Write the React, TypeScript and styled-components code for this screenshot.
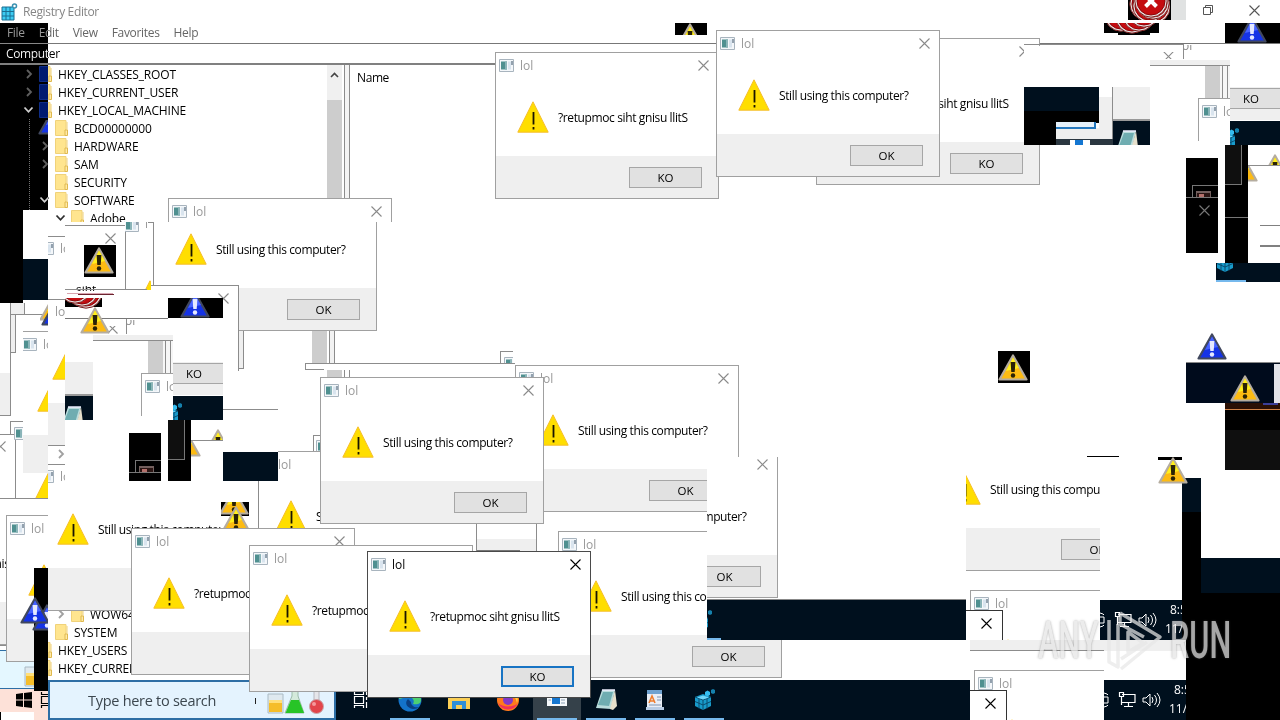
import { ReactNode } from "react";
import styled, { createGlobalStyle, css } from "styled-components";

const GlobalStyle = createGlobalStyle`
  body {
    margin: 0;
    overflow: hidden;
    background: #fff;
    font-family: "Open Sans", "Noto Sans", sans-serif;
    font-size: 12px;
    color: #000;
  }
  svg {
    display: block;
    flex: none;
  }
`;

const NAVY = "#00101e";
const GREY = "#efefef";
const LINE = "#8c8c8c";

/* ---------- registry editor window ---------- */

const Desktop = styled.div`
  position: relative;
  width: 1280px;
  height: 720px;
  overflow: hidden;
  background: #fff;
  display: flex;
  flex-direction: column;
`;

const TitleBar = styled.div`
  height: 23px;
  display: flex;
  align-items: center;
  gap: 5px;
  color: #858585;
  letter-spacing: -0.35px;
  .controls {
    margin-left: auto;
    display: flex;
    align-items: center;
    gap: 36px;
    padding: 0 20px 3px 0;
  }
`;

const MenuBar = styled.div`
  height: 18px;
  display: flex;
  align-items: center;
  gap: 14px;
  padding: 0 0 2px 7px;
  color: #666;
  letter-spacing: -0.32px;
`;

const AddressBar = styled.div`
  height: 19px;
  display: flex;
  align-items: center;
  padding-left: 6px;
  letter-spacing: -0.35px;
  border-top: 1px solid #777;
  border-bottom: 2px solid #808080;
`;

const Panes = styled.div`
  height: 615px;
  display: flex;
`;

const Tree = styled.div`
  width: 327px;
  box-sizing: border-box;
  overflow: hidden;
  background: repeating-linear-gradient(#8a8a8a 0 1px, transparent 1px 2px) 29px 54px / 1px 100% no-repeat;
`;

const TreeRow = styled.div<{ $depth: number }>`
  height: 18px;
  display: flex;
  align-items: center;
  padding-left: ${(p) => 23 + p.$depth * 16}px;
  gap: 5px;
  letter-spacing: ${(p) => (p.$depth ? -0.1 : -0.16)}px;
  white-space: nowrap;
  span {
    padding-left: 1px;
  }
`;

const HiddenRows = styled.div`
  height: 378px;
`;

const ScrollBar = styled.div`
  width: 15px;
  background: #f0f0f0;
  .arrow {
    height: 35px;
    display: flex;
    justify-content: center;
    padding-top: 6px;
    box-sizing: border-box;
  }
  .thumb {
    height: 500px;
    background: #cdcdcd;
  }
`;

const ListPane = styled.div`
  flex: 1;
  margin-left: 2px;
  border-left: 1px solid ${LINE};
  padding-left: 4px;
  background: #f4f4f4;
  .columns {
    height: 100%;
    background: #fff;
    border-left: 1px solid ${LINE};
    padding: 4px 7px;
    letter-spacing: -0.4px;
  }
`;

const TaskBar = styled.div`
  height: 40px;
  display: flex;
  background: ${NAVY};
  .start {
    width: 48px;
    background: #fde1d8;
    display: flex;
    align-items: center;
    gap: 8px;
    padding-left: 16px;
    box-sizing: border-box;
    overflow: hidden;
  }
`;

const SearchBox = styled.div`
  width: 288px;
  box-sizing: border-box;
  border: 2px solid #2d6ea5;
  background: #e4f3fe;
  display: flex;
  align-items: center;
  padding: 0 8px 0 38px;
  font-size: 14.5px;
  letter-spacing: -0.28px;
  color: #3c474f;
  white-space: nowrap;
  i {
    width: 1px;
    height: 6px;
    margin: 2px 10px 0 auto;
    background: #222;
  }
`;

const Apps = styled.div`
  display: flex;
  padding-left: 1px;
  gap: 1px;
`;

const AppSlot = styled.div<{ $open?: boolean; $current?: boolean }>`
  width: 48px;
  box-sizing: border-box;
  display: flex;
  align-items: center;
  justify-content: center;
  background-color: ${(p) => (p.$current ? "#35414a" : "transparent")};
  background-image: ${(p) => (p.$open ? "linear-gradient(#76b9ed, #76b9ed)" : "none")};
  background-size: 40px 2px;
  background-position: 50% 100%;
  background-repeat: no-repeat;
`;

/* ---------- loose pieces lying over the desktop ---------- */

type Box = { $x: number; $y: number; $w: number; $h: number };

const place = css<Box>`
  position: absolute;
  left: ${(p) => p.$x}px;
  top: ${(p) => p.$y}px;
  width: ${(p) => p.$w}px;
  height: ${(p) => p.$h}px;
`;

const Block = styled.div<Box & { $c: string }>`
  ${place}
  background: ${(p) => p.$c};
`;

const Inverted = styled.div<Box>`
  ${place}
  backdrop-filter: invert(1);
`;

const ShardFrame = styled.div<Box>`
  ${place}
  overflow: hidden;
  .plane {
    position: absolute;
    left: ${(p) => -p.$x}px;
    top: ${(p) => -p.$y}px;
    width: 1280px;
    height: 720px;
  }
`;

const Pin = styled.div<{ $x: number; $y: number; $c?: string; $size?: number }>`
  position: absolute;
  left: ${(p) => p.$x}px;
  top: ${(p) => p.$y}px;
  color: ${(p) => p.$c ?? "#000"};
  font-size: ${(p) => p.$size ?? 12}px;
  line-height: 16px;
  white-space: nowrap;
`;

const DialogFrame = styled.div<{ $x: number; $y: number; $active?: boolean }>`
  position: absolute;
  left: ${(p) => p.$x}px;
  top: ${(p) => p.$y}px;
  width: 224px;
  height: 147px;
  box-sizing: border-box;
  border: 1px solid ${(p) => (p.$active ? "#4a4a4a" : "#a0a0a0")};
  background: #fff;
  display: flex;
  flex-direction: column;
  .caption {
    height: 24px;
    display: flex;
    align-items: center;
    padding: 0 9px 0 3px;
    gap: 6px;
    color: ${(p) => (p.$active ? "#000" : "#999")};
  }
  .caption svg:last-child {
    margin-left: auto;
  }
  .message {
    flex: 1;
    display: flex;
    align-items: center;
    gap: 9px;
    padding: 1px 0 0 21px;
    letter-spacing: -0.38px;
    white-space: nowrap;
  }
  .footer {
    height: 42px;
    background: ${GREY};
    display: flex;
    justify-content: flex-end;
    padding: 11px 16px 0 0;
    box-sizing: border-box;
  }
`;

const PushButton = styled.div<{ $active?: boolean }>`
  width: 73px;
  height: 21px;
  box-sizing: border-box;
  display: flex;
  align-items: center;
  justify-content: center;
  background: #e1e1e1;
  border: ${(p) => (p.$active ? "2px solid #1874c4" : "1px solid #a6a6a6")};
  font-size: 11.5px;
`;

const Watermark = styled.div`
  position: absolute;
  left: 1038px;
  top: 609px;
  height: 64px;
  width: 194px;
  display: flex;
  align-items: center;
  justify-content: space-between;
  opacity: 0.72;
  color: #e6e6e6;
  text-shadow: 0 0 3px rgba(90, 90, 90, 0.75);
  span {
    display: block;
    width: 62px;
    font: 500 52px/64px Roboto, sans-serif;
    transform-origin: 0 50%;
    transform: scaleX(0.59);
  }
`;

/* ---------- drawings ---------- */

const Flat = () => (
  <svg width="32" height="32" viewBox="0 0 32 32">
    <path d="M16 0.8 31.2 31.2H0.8Z" fill="#ffde00" stroke="#f5bd2c" />
    <path d="M16.500 11v12.500M16.500 26v2.500" stroke="#1a1500" strokeWidth="1.800" />
  </svg>
);

const Gloss = ({ blue }: { blue?: boolean }) => (
  <svg width="30" height="27" viewBox="0 0 30 27">
    <path
      d="M15 1.5 28.5 25.5H1.5Z"
      fill={blue ? "#1533e6" : "#fdbb12"}
      stroke={blue ? "#41485e" : "#b5ada0"}
      strokeWidth="2.2"
      strokeLinejoin="round"
    />
    <path d="M15 3.500 21 14 8 17Z" fill={blue ? "#4763ff" : "#fff01e"} />
    <path d="M12.600 8h4.800l-.7 10h-3.400z" fill={blue ? "#e5e9ff" : "#2a2206"} />
    <circle cx="15" cy="21.5" r="2.2" fill={blue ? "#e5e9ff" : "#2a2206"} />
  </svg>
);

const ErrorDisc = () => (
  <svg width="34" height="34" viewBox="0 0 34 34">
    <circle cx="17" cy="17" r="16.200" fill="#e4dede" stroke="#7e1d1d" />
    <circle cx="17" cy="17" r="14" fill="#c40c10" stroke="#8c0508" />
    <path d="M11.500 11.500 22.500 22.500M22.500 11.500 11.500 22.500" stroke="#fff" strokeWidth="4" />
  </svg>
);

const AppIcon = () => (
  <svg width="15" height="13" viewBox="0 0 15 13">
    <path d="M.5 .5h14v12H.5z" fill="#f4f7fa" stroke="#a8b4be" />
    <path d="M2 2.500h6v8H2z" fill="#4f9090" />
    <path d="M6 2.500h2v8H6z" fill="#8ab4b8" />
    <path d="M9 2.500h3v8H9z" fill="#d9e4ee" />
    <path d="M12 2h2v4h-2z" fill="#93a1ae" />
  </svg>
);

const Cross = ({ color = "#8a8a8a" }: { color?: string }) => (
  <svg width="11" height="11" viewBox="0 0 11 11">
    <path d="M.5 .5l10 10M10.5 .5l-10 10" stroke={color} strokeWidth="1.1" />
  </svg>
);

const Restore = () => (
  <svg width="10" height="10" viewBox="0 0 10 10">
    <path d="M.5 2.5h7v7h-7zM2.5 2.5v-2h7v7h-2" fill="none" stroke="#555" />
  </svg>
);

const Chevron = ({ open, none }: { open?: boolean; none?: boolean }) => (
  <svg width="11" height="10" viewBox="0 0 11 10">
    {!none && (
      <path
        d={open ? "M1.5 2.5 5.5 6.8 9.5 2.5" : "M4 1 8 5 4 9"}
        fill="none"
        stroke={open ? "#303030" : "#a0a0a0"}
        strokeWidth="1.8"
      />
    )}
  </svg>
);

const Folder = () => (
  <svg width="13" height="16" viewBox="0 0 13 16">
    <path d="M.5 .5h10.500v15H.5z" fill="#ffe58f" stroke="#f0d27a" />
    <path d="M10 10h2.500v5.500H10z" fill="#ffe9a6" stroke="#dfb94f" />
    <path d="M12 2v8" stroke="#f0d27a" />
  </svg>
);

const Cubes = ({ size = 22 }: { size?: number }) => (
  <svg width={size} height={size} viewBox="0 0 22 22">
    <path d="M2 8l8-3 8 3v9l-8 4-8-4z" fill="#189bcb" />
    <path d="M2 8l8 3 8-3M10 11v10M2 12.5l8 3.5 8-3.5M6 9.500v10M14 9.500v10" fill="none" stroke="#0b4d70" />
    <path d="M4 8.500l6-2 6 2-6 2z" fill="#6fd6fa" />
    <path d="M12 3l2.500-1.500L17 3v3l-2.500 1.500L12 6z" fill="#35bdf0" />
    <path d="M18 1l2-1 2 1v3l-2 1-2-1z" fill="#1581ad" />
  </svg>
);

const RegistryLogo = () => (
  <svg width="18" height="18" viewBox="0 0 18 18">
    <path d="M2 4h12v13H2z" fill="#3ccbf2" />
    <path d="M2 4h12v13H2zM6 4v13M10 4v13M2 8.500h12M2 13h12" fill="none" stroke="#1b6f92" />
    <circle cx="14.500" cy="3" r="2" fill="#fff" stroke="#3a90b0" strokeWidth="1.500" />
  </svg>
);

const Notepad = () => (
  <svg width="24" height="22" viewBox="0 0 24 22">
    <path d="M8 1h13l-4 19-15-1z" fill="#b9dcdc" />
    <path d="M9 3h10l-4 14-11-1z" fill="#6fadb1" />
    <path d="M21 1l2 16-4 4-3-1z" fill="#e7e0cc" />
    <path d="M8 1h13" stroke="#eef" strokeWidth="1.5" />
  </svg>
);

const WordPad = () => (
  <svg width="20" height="22" viewBox="0 0 20 22">
    <path d="M2 1h15v17H2z" fill="#e9eef6" />
    <path d="M2 1h15v4H2z" fill="#6fa2d0" />
    <path d="M4 14l3-7 3 7M5 12h4" stroke="#ef7d2d" strokeWidth="1.6" fill="none" />
    <path d="M12 8h4M12 11h4M4 16h12" stroke="#7e94b0" />
    <path d="M1 18h18v3H1z" fill="#b8cce4" />
  </svg>
);

const Edge = () => (
  <svg width="24" height="24" viewBox="0 0 24 24">
    <circle cx="12" cy="12" r="11.5" fill="#1373c9" />
    <path d="M1 11a11 11 0 0 1 22 1c0 4-4 5-8 4 2-3 0-7-4-7-5 0-8 2-10 2z" fill="#4ccf72" />
    <path d="M10 11c-4 4-1 9 5 10 3 0 5-1 6-2-4 1-8-1-8-5z" fill="#0a3f80" />
  </svg>
);

const Explorer = () => (
  <svg width="22" height="20" viewBox="0 0 22 20">
    <path d="M0 2h9l2 2h11v15H0z" fill="#fbcf55" />
    <path d="M4 11h14v8h-4v-4H8v4H4z" fill="#2f8fd8" />
  </svg>
);

const Firefox = () => (
  <svg width="22" height="22" viewBox="0 0 22 22">
    <circle cx="11" cy="11" r="11" fill="#ff7a1c" />
    <path d="M1 14a11 11 0 0 0 20 0c-3 4-15 5-20 0z" fill="#f0305a" />
    <circle cx="11" cy="11" r="5" fill="#8438c8" />
    <path d="M15 2c5 2 7 7 5 12-1-4-2-7-6-8z" fill="#ffd23a" />
  </svg>
);

const Program = () => (
  <svg width="20" height="16" viewBox="0 0 20 16">
    <path d="M0 0h20v14H0z" fill="#f5f8fb" />
    <path d="M5 2h8v10H5z" fill="#1476d1" />
    <path d="M1.500 5h2.500M1.500 8h2.500M14 5h4M14 8h4M14 11h4" stroke="#8ba0b4" />
  </svg>
);

const TaskView = ({ color = "#fff" }: { color?: string }) => (
  <svg width="16" height="16" viewBox="0 0 16 16">
    <path
      d="M1.500 4.500h9v7h-9zM1.500 0v2.500h9V0M1.500 16v-2.500h9V16M13.500 0v3M13.500 5v3M13.500 10v6"
      fill="none"
      stroke={color}
      strokeWidth="1.200"
    />
  </svg>
);

const WinLogo = () => (
  <svg width="16" height="16" viewBox="0 0 16 16">
    <path d="M0 2l7-1v6.500H0zM8 1l8-1v7.500H8zM0 8.500h7V15l-7-1zM8 8.500h8V16l-8-1z" fill="#000" />
  </svg>
);

const Flasks = () => (
  <svg width="60" height="30" viewBox="0 0 60 30">
    <path d="M2 9h15v19H2z" fill="#dfe9ef" stroke="#aabac4" />
    <path d="M3 17h13v10H3z" fill="#f5bd2a" />
    <path d="M3 15h13v3H3z" fill="#ffdf7a" />
    <path d="M26 2h6v9l6 17H19l7-17z" fill="#d4eadb" stroke="#9cbcaa" />
    <path d="M25 15h8l5 13H19.500z" fill="#27c427" />
    <path d="M48 3h5v14h-5z" fill="#e6e6ea" stroke="#b8b8c0" />
    <circle cx="50.500" cy="21.500" r="7" fill="#e2454b" stroke="#c8a9ac" />
    <circle cx="48" cy="19" r="2" fill="#f59a9c" />
  </svg>
);

const Tray = () => (
  <svg width="60" height="18" viewBox="0 0 60 18" fill="none" stroke="#fff">
    <path d="M0 2q4 1 4 2M0 16q4-1 4-2M0 6h4v6H0" />
    <path d="M18 3.500h13v8H18M15.500 1.500h4v4h-4zM17.500 5v9M24.500 12v3M20 15.500h9" strokeWidth="1.200" />
    <path d="M39 7v4h3l4 4V3l-4 4zM48 6q2 3 0 6M50.500 4q4 5 0 10M53 2q6 7 0 14" />
  </svg>
);

const PlayMark = () => (
  <svg width="58" height="62" viewBox="0 0 58 62" fill="none" stroke="#e8e8e8" strokeWidth="3.500" strokeLinejoin="round">
    <path d="M3 10v42l9 5V14M14 3l40 24-39 32M14 3v11l24 13M22 22v20l15-9zM15 49l26-17" />
  </svg>
);

/* ---------- composed parts ---------- */

const FORWARD = "Still using this computer?";
const BACKWARD = "?retupmoc siht gnisu llitS";

type DialogProps = { x: number; y: number; reversed?: boolean; active?: boolean };

const Dialog = ({ x, y, reversed, active }: DialogProps) => (
  <DialogFrame $x={x} $y={y} $active={active}>
    <div className="caption">
      <AppIcon />
      <span>lol</span>
      <Cross color={active ? "#000" : undefined} />
    </div>
    <div className="message">
      <Flat />
      <span>{reversed ? BACKWARD : FORWARD}</span>
    </div>
    <div className="footer">
      <PushButton $active={active}>{reversed ? "KO" : "OK"}</PushButton>
    </div>
  </DialogFrame>
);

type ShardProps = { x: number; y: number; w: number; h: number; children: ReactNode };

// A window onto the desktop plane: children keep desktop coordinates.
const Shard = ({ x, y, w, h, children }: ShardProps) => (
  <ShardFrame $x={x} $y={y} $w={w} $h={h}>
    <div className="plane">{children}</div>
  </ShardFrame>
);

type Rect = [number, number, number, number, string];

const Blocks = ({ items }: { items: Rect[] }) => (
  <>
    {items.map(([x, y, w, h, c], i) => (
      <Block key={i} $x={x} $y={y} $w={w} $h={h} $c={c} />
    ))}
  </>
);

// The torn cluster that shows up twice, once at each side of the screen.
const Cluster = ({ x, y }: { x: number; y: number }) => (
  <>
    <Blocks
      items={[
        [x, y, 80, 5, GREY],
        [x, y + 5, 80, 1, LINE],
        [x + 55, y + 6, 15, 33, "#cdcdcd"],
        [x + 70, y + 6, 10, 33, "#f6f6f6"],
        [x + 72, y + 6, 1, 33, LINE],
        [x + 77, y + 6, 1, 33, LINE],
        [x + 33, y - 16, 1, 15, LINE],
        [x + 80, y + 27, 50, 33, GREY],
        [x + 80, y + 61, 50, 24, NAVY],
      ]}
    />
    <Shard x={x + 34} y={y - 15} w={14} h={8}>
      <Pin $x={x + 32} $y={y - 22} $c="#8a8a8a">ol</Pin>
    </Shard>
    <Shard x={x + 48} y={y + 38} w={32} h={43}>
      <Dialog x={x + 48} y={y + 38} />
    </Shard>
    <Shard x={x + 80} y={y + 28} w={50} h={21}>
      <Blocks items={[[x + 80, y + 28, 60, 21, "#a6a6a6"], [x + 80, y + 29, 60, 19, "#e1e1e1"]]} />
      <Pin $x={x + 93} $y={y + 31} $size={11.5}>KO</Pin>
    </Shard>
  </>
);

const DarkStrips = ({ x, y }: { x: number; y: number }) => (
  <>
    <Blocks
      items={[
        [x, y + 13, 32, 48, "#000"],
        [x + 6, y + 40, 26, 1, "#777"],
        [x + 6, y + 40, 1, 12, "#777"],
        [x + 10, y + 46, 15, 6, "#73605e"],
        [x + 11, y + 48, 13, 4, "#2b1513"],
        [x + 13, y + 49, 5, 3, "#b3706b"],
        [x, y + 52, 32, 1, "#777"],
        [x + 39, y, 23, 61, "#000"],
        [x + 39, y, 17, 40, "#777"],
        [x + 39, y, 16, 39, "#0f0f0f"],
        [x + 62, y + 20, 32, 1, LINE],
      ]}
    />
    <Shard x={x + 62} y={y + 21} w={20} h={20}>
      <Pin $x={x + 42} $y={y + 10}><Gloss /></Pin>
    </Shard>
    <Shard x={x + 80} y={y + 9} w={14} h={11}>
      <Pin $x={x + 74} $y={y + 9}><Gloss /></Pin>
    </Shard>
  </>
);

const Leftovers = ({ x, y }: { x: number; y: number }) => (
  <>
    <Block $x={x} $y={y - 70} $w={134} $h={70} $c="#fff" />
    <Shard x={x} y={y - 30} w={134} h={70}>
      <Blocks items={[[x, y, 134, 40, "#fff"]]} />
      <Dialog x={x + 4} y={y - 10} />
      <Blocks items={[[x, y + 10, 37, 31, "#333"], [x, y + 11, 36, 30, "#fff"]]} />
      <Pin $x={x + 15} $y={y + 18}><Cross color="#000" /></Pin>
    </Shard>
  </>
);

const SystemTray = ({ x, y }: { x: number; y: number }) => (
  <Shard x={x} y={y} w={82} h={40}>
    <Blocks items={[[x, y, 82, 40, NAVY]]} />
    <Pin $x={x} $y={y + 11}><Tray /></Pin>
    <Pin $x={x + 70} $y={y + 2} $c="#fff">8:56 AM</Pin>
    <Pin $x={x + 65} $y={y + 21} $c="#fff">11/12/2024</Pin>
  </Shard>
);

type RowData = { depth: number; name: string; open?: boolean; leaf?: boolean };

const treeTop: RowData[] = [
  { depth: 0, name: "HKEY_CLASSES_ROOT" },
  { depth: 0, name: "HKEY_CURRENT_USER" },
  { depth: 0, name: "HKEY_LOCAL_MACHINE", open: true },
  { depth: 1, name: "BCD00000000", leaf: true },
  { depth: 1, name: "HARDWARE" },
  { depth: 1, name: "SAM" },
  { depth: 1, name: "SECURITY", leaf: true },
  { depth: 1, name: "SOFTWARE", open: true },
  { depth: 2, name: "Adobe", open: true },
];

const treeBottom: RowData[] = [
  { depth: 2, name: "WOW6432Node" },
  { depth: 1, name: "SYSTEM" },
  { depth: 0, name: "HKEY_USERS" },
  { depth: 0, name: "HKEY_CURRENT_CONFIG" },
];

const Rows = ({ rows }: { rows: RowData[] }) => (
  <>
    {rows.map(({ depth, name, open, leaf }) => (
      <TreeRow key={name} $depth={depth}>
        <Chevron open={open} none={leaf} />
        <Folder />
        <span>{name}</span>
      </TreeRow>
    ))}
  </>
);

function RegistryEditor() {
  return (
    <>
      <TitleBar>
        <RegistryLogo />
        <span>Registry Editor</span>
        <div className="controls">
          <Restore />
          <Cross color="#555" />
        </div>
      </TitleBar>
      <MenuBar>
        {["File", "Edit", "View", "Favorites", "Help"].map((m) => (
          <span key={m}>{m}</span>
        ))}
      </MenuBar>
      <AddressBar>Computer</AddressBar>
      <Panes>
        <Tree>
          <Rows rows={treeTop} />
          <HiddenRows />
          <Rows rows={treeBottom} />
        </Tree>
        <ScrollBar>
          <div className="arrow">
            <svg width="9" height="9" viewBox="0 0 9 9">
              <path d="M1 6 4.500 2.500 8 6" fill="none" stroke="#444" strokeWidth="1.600" />
            </svg>
          </div>
          <div className="thumb" />
        </ScrollBar>
        <ListPane>
          <div className="columns">Name</div>
        </ListPane>
      </Panes>
      <TaskBar>
        <div className="start">
          <WinLogo />
          <TaskView color="#000" />
        </div>
        <SearchBox>
          <span>Type here to search</span>
          <i />
          <Flasks />
        </SearchBox>
        <Apps>
          <AppSlot><TaskView /></AppSlot>
          <AppSlot $open><Edge /></AppSlot>
          <AppSlot><Explorer /></AppSlot>
          <AppSlot><Firefox /></AppSlot>
          <AppSlot $open $current><Program /></AppSlot>
          <AppSlot $open><Notepad /></AppSlot>
          <AppSlot $open><WordPad /></AppSlot>
          <AppSlot $open><Cubes /></AppSlot>
        </Apps>
      </TaskBar>
    </>
  );
}

function LeftDebris() {
  return (
    <>
      <Inverted $x={0} $y={23} $w={48} $h={187} />
      <Shard x={38} y={120} w={10} h={15}>
        <Blocks items={[[38, 120, 10, 15, "#000"]]} />
        <Pin $x={38} $y={108}><Gloss blue /></Pin>
      </Shard>
      <Blocks
        items={[
          [0, 210, 23, 93, "#000"],
          [23, 210, 25, 400, "#fff"],
          [0, 303, 23, 342, "#fff"],
          [48, 222, 320, 388, "#fff"],
          [23, 259, 25, 41, NAVY],
          [11, 303, 13, 11, GREY],
          [24, 303, 1, 11, LINE],
          [10, 303, 1, 112, LINE],
          [11, 314, 37, 1, LINE],
          [11, 315, 4, 37, GREY],
          [15, 314, 1, 38, LINE],
          [11, 352, 5, 1, LINE],
          [0, 373, 10, 42, GREY],
          [0, 415, 11, 1, LINE],
          [10, 421, 13, 1, LINE],
          [10, 421, 1, 13, LINE],
          [0, 434, 15, 1, LINE],
          [15, 434, 1, 64, LINE],
          [23, 435, 25, 38, GREY],
          [0, 498, 48, 1, LINE],
          [48, 299, 17, 1, LINE],
          [48, 236, 17, 1, LINE],
          [48, 403, 17, 42, GREY],
          [48, 445, 17, 1, LINE],
          [48, 464, 17, 1, LINE],
          [65, 225, 61, 1, LINE],
          [125, 225, 1, 65, LINE],
          [153, 222, 1, 64, LINE],
          [84, 245, 32, 32, "#000"],
        ]}
      />
      <Shard x={23} y={331} w={25} h={30}><Dialog x={18} y={331} /></Shard>
      <Shard x={37} y={388} w={11} h={24}><Pin $x={37} $y={380}><Flat /></Pin></Shard>
      <Shard x={34} y={473} w={14} h={25}><Pin $x={33} $y={471}><Flat /></Pin></Shard>
      <Shard x={40} y={303} w={8} h={23}>
        <Pin $x={39} $y={294}><Gloss /></Pin>
        <Pin $x={41} $y={299}><Gloss blue /></Pin>
      </Shard>
      <Shard x={14} y={426} w={9} h={14}><Pin $x={14} $y={427}><AppIcon /></Pin></Shard>
      <Shard x={0} y={440} w={7} h={14}><Pin $x={-5} $y={441}><Cross /></Pin></Shard>
      <Shard x={48} y={242} w={17} h={14}>
        <Pin $x={39} $y={242}><AppIcon /></Pin>
        <Pin $x={60} $y={241} $c="#999">lol</Pin>
      </Shard>
      <Shard x={48} y={470} w={17} h={14}>
        <Pin $x={39} $y={470}><AppIcon /></Pin>
        <Pin $x={60} $y={469} $c="#999">lol</Pin>
      </Shard>
      <Shard x={48} y={303} w={17} h={18}><Pin $x={55} $y={304} $c="#999">lol</Pin></Shard>
      <Shard x={50} y={350} w={15} h={30}><Pin $x={52} $y={348}><Flat /></Pin></Shard>
      <Pin $x={55} $y={449}><Chevron /></Pin>
      <Pin $x={105} $y={233}><Cross /></Pin>
      <Pin $x={84} $y={247}><Gloss /></Pin>
      <Shard x={125} y={222} w={28} h={10}>
        <Pin $x={124} $y={219}><AppIcon /></Pin>
        <Pin $x={145} $y={216} $c="#999">l</Pin>
        <Blocks items={[[148, 222, 5, 1, LINE]]} />
      </Shard>
      <Shard x={65} y={286} w={32} h={5}><Pin $x={76} $y={282}>siht</Pin></Shard>
      <Shard x={142} y={280} w={9} h={10}><Pin $x={134} $y={280}><Flat /></Pin></Shard>

      <Shard x={168} y={198} w={224} h={24}><Dialog x={168} y={198} /></Shard>
      <Shard x={154} y={222} w={223} h={109}><Dialog x={153} y={184} /></Shard>
      <Blocks
        items={[
          [65, 292, 173, 93, "#fff"],
          [151, 285, 88, 1, LINE],
          [152, 286, 86, 10, "#fff"],
          [238, 285, 1, 86, LINE],
          [239, 331, 4, 37, GREY],
          [243, 331, 1, 38, LINE],
          [239, 368, 5, 1, LINE],
          [65, 289, 82, 1, LINE],
          [67, 293, 46, 1, "#d8a5b0"],
          [78, 294, 36, 1, "#6c2430"],
          [65, 318, 103, 1, "#777"],
          [65, 362, 28, 32, GREY],
          [65, 394, 28, 2, "#999"],
          [65, 396, 28, 24, NAVY],
          [65, 298, 37, 9, "#000"],
          [223, 409, 55, 1, LINE],
          [312, 331, 15, 32, "#cdcdcd"],
          [329, 331, 6, 32, "#f2f2f2"],
          [329, 331, 1, 32, LINE],
          [334, 331, 1, 32, LINE],
        ]}
      />
      <Pin $x={218} $y={293}><Cross /></Pin>
      <Shard x={168} y={298} w={55} h={20}>
        <Blocks items={[[168, 298, 55, 20, "#000"]]} />
        <Pin $x={180} $y={291}><Gloss blue /></Pin>
      </Shard>
      <Shard x={65} y={298} w={37} h={11}>
        <Pin $x={69} $y={275}><ErrorDisc /></Pin>
        <Pin $x={65} $y={273}><ErrorDisc /></Pin>
        <Pin $x={58} $y={270}><ErrorDisc /></Pin>
      </Shard>
      <Shard x={108} y={326} w={10} h={8}><Pin $x={107} $y={323}><Cross /></Pin></Shard>
      <Cluster x={93} y={335} />
      <Pin $x={80} $y={307}><Gloss /></Pin>
      <Shard x={65} y={396} w={28} h={24}><Pin $x={60} $y={406}><Notepad /></Pin></Shard>
      <Shard x={173} y={396} w={20} h={24}><Pin $x={160} $y={403}><Cubes /></Pin></Shard>
      <DarkStrips x={129} y={420} />
      <Block $x={223} $y={452} $w={55} $h={29} $c={NAVY} />
    </>
  );
}

function RightDebris() {
  return (
    <>
      <Blocks
        items={[
          [1024, 46, 256, 99, "#fff"],
          [1024, 44, 160, 1, LINE],
          [1024, 87, 75, 34, NAVY],
          [1024, 111, 75, 12, "#000"],
          [1024, 121, 32, 24, "#000"],
          [1099, 97, 13, 42, GREY],
          [1056, 128, 56, 11, GREY],
          [1112, 87, 1, 52, LINE],
          [1113, 87, 37, 32, GREY],
          [1113, 119, 37, 2, "#999"],
          [1056, 139, 94, 6, "#2b3740"],
          [1113, 121, 37, 24, NAVY],
          [1056, 122, 40, 7, "#2478be"],
          [1056, 122, 38, 5, "#e5f1fb"],
          [1070, 140, 20, 5, "#fff"],
          [1075, 140, 8, 5, "#1476d1"],
          [1171, 0, 15, 20, "#e0e2e2"],
          [1128, 0, 43, 20, "#000"],
          [1104, 23, 55, 10, "#000"],
          [1118, 33, 32, 2, "#000"],
          [675, 23, 32, 12, "#000"],
        ]}
      />
      <Shard x={1128} y={0} w={42} h={20}>
        <Pin $x={1137} $y={-10}><ErrorDisc /></Pin>
        <Pin $x={1129} $y={-13}><ErrorDisc /></Pin>
        <Pin $x={1132} $y={-11}><ErrorDisc /></Pin>
        <Pin $x={1136} $y={-14}><ErrorDisc /></Pin>
        <Pin $x={1134} $y={-16}><ErrorDisc /></Pin>
      </Shard>
      <Shard x={1104} y={23} w={55} h={12}>
        <Pin $x={1104} $y={-2}><ErrorDisc /></Pin>
        <Pin $x={1115} $y={0}><ErrorDisc /></Pin>
        <Pin $x={1122} $y={-2}><ErrorDisc /></Pin>
        <Pin $x={1127} $y={-6}><ErrorDisc /></Pin>
      </Shard>
      <Shard x={675} y={23} w={32} h={12}><Pin $x={675} $y={23}><Gloss /></Pin></Shard>
      <Shard x={1225} y={23} w={55} h={20}>
        <Blocks items={[[1225, 23, 55, 20, "#000"]]} />
        <Pin $x={1237} $y={16}><Gloss blue /></Pin>
      </Shard>
      <Shard x={1163} y={52} w={11} h={7}><Pin $x={1163} $y={51}><Cross /></Pin></Shard>
      <Cluster x={1150} y={60} />
      <Shard x={1113} y={121} w={37} h={24}><Pin $x={1115} $y={130}><Notepad /></Pin></Shard>
      <Shard x={1230} y={121} w={20} h={24}><Pin $x={1217} $y={128}><Cubes /></Pin></Shard>
      <DarkStrips x={1186} y={145} />
      <Blocks
        items={[
          [1186, 198, 32, 55, "#000"],
          [1225, 206, 23, 57, "#000"],
          [1225, 217, 23, 1, "#777"],
          [1260, 225, 20, 1, "#808080"],
          [1260, 245, 20, 2, "#808080"],
          [1216, 263, 64, 19, NAVY],
          [1216, 280, 30, 2, "#76b9ed"],
          [1186, 362, 94, 1, "#888"],
          [1186, 363, 94, 40, "#000b1c"],
          [1274, 364, 6, 39, "#e2e3e8"],
          [1225, 403, 55, 6, "#2a1005"],
          [1225, 409, 55, 1, "#d08248"],
          [1225, 410, 55, 20, "#000"],
          [1225, 430, 55, 40, "#0f0f0f"],
          [1263, 403, 15, 2, "#3a3f9a"],
          [998, 351, 32, 32, "#000"],
          [1087, 456, 32, 1, "#000"],
          [1158, 457, 24, 3, "#000"],
          [1182, 478, 19, 34, NAVY],
          [1182, 512, 19, 208, "#000"],
          [1201, 558, 79, 35, NAVY],
          [1201, 593, 79, 127, "#000"],
        ]}
      />
      <Pin $x={1199} $y={205}><Cross color="#777" /></Pin>
      <Shard x={1216} y={263} w={20} h={10}><Pin $x={1215} $y={251}><Cubes /></Pin></Shard>
      <Pin $x={1197} $y={333}><Gloss blue /></Pin>
      <Pin $x={1230} $y={375}><Gloss /></Pin>
      <Pin $x={998} $y={354}><Gloss /></Pin>
      <Pin $x={1158} $y={457}><Gloss /></Pin>
    </>
  );
}

function TopDialogs() {
  return (
    <>
      <Dialog x={816} y={38} reversed />
      <Dialog x={495} y={52} reversed />
      <Dialog x={716} y={30} />
    </>
  );
}

function MiddleDialogs() {
  return (
    <>
      <Blocks
        items={[
          [305, 363, 210, 14, "#fff"],
          [305, 363, 210, 1, LINE],
          [305, 363, 1, 7, LINE],
          [305, 369, 19, 1, LINE],
          [327, 370, 15, 7, "#cdcdcd"],
          [344, 370, 1, 7, LINE],
          [349, 370, 1, 7, LINE],
          [500, 351, 13, 1, LINE],
          [500, 351, 1, 12, LINE],
          [313, 435, 7, 1, LINE],
          [313, 435, 1, 16, LINE],
          [476, 523, 1, 28, LINE],
          [477, 539, 59, 12, GREY],
          [477, 550, 43, 1, "#777"],
          [536, 511, 1, 40, LINE],
          [258, 481, 1, 47, LINE],
          [707, 600, 259, 40, NAVY],
        ]}
      />
      <Shard x={504} y={357} w={9} h={6}><Pin $x={504} $y={357}><AppIcon /></Pin></Shard>
      <Shard x={316} y={440} w={4} h={11}><Pin $x={316} $y={440}><AppIcon /></Pin></Shard>
      <Shard x={278} y={451} w={60} h={30}><Dialog x={253} y={451} /></Shard>
      <Shard x={259} y={481} w={70} h={48}><Dialog x={253} y={451} /></Shard>
      <Shard x={515} y={365} w={224} h={92}><Dialog x={515} y={365} /></Shard>
      <Shard x={515} y={457} w={192} h={55}><Dialog x={515} y={365} /></Shard>
      <Shard x={707} y={457} w={71} h={141}><Dialog x={554} y={451} /></Shard>
      <Shard x={558} y={531} w={149} h={109}><Dialog x={558} y={531} /></Shard>
      <Shard x={558} y={640} w={224} h={38}><Dialog x={558} y={531} /></Shard>
      <Block $x={707} $y={599} $w={259} $h={1} $c="#888" />
      <Shard x={707} y={600} w={14} h={40}>
        <Pin $x={690} $y={610}><Cubes /></Pin>
        <Blocks items={[[707, 638, 14, 2, "#76b9ed"]]} />
      </Shard>
      <Dialog x={320} y={377} />
      <Shard x={48} y={500} w={173} h={111}><Dialog x={35} y={464} /></Shard>
      <Shard x={221} y={502} w={28} h={14}>
        <Blocks items={[[221, 502, 28, 14, "#000"]]} />
        <Pin $x={219} $y={488}><Gloss /></Pin>
      </Shard>
      <Pin $x={221} $y={506}><Gloss /></Pin>
      <Blocks
        items={[
          [0, 645, 34, 5, "#fff"],
          [0, 645, 8, 1, LINE],
          [0, 650, 34, 1, "#2d6ea5"],
          [0, 651, 34, 37, "#e4f7ff"],
          [0, 688, 34, 1, "#2d6ea5"],
          [0, 712, 34, 8, "#fff"],
          [0, 712, 1, 8, "#000"],
        ]}
      />
      <Shard x={24} y={660} w={10} h={28}><Pin $x={23} $y={658}><Flasks /></Pin></Shard>
      <Shard x={0} y={515} w={48} h={147}>
        <Dialog x={-124} y={498} />
        <Dialog x={6} y={515} />
      </Shard>
      <Block $x={34} $y={568} $w={14} $h={123} $c="#000" />
      <Shard x={20} y={590} w={28} h={45}>
        <Pin $x={32} $y={604}><Gloss blue /></Pin>
        <Pin $x={20} $y={597}><Gloss blue /></Pin>
      </Shard>
      <Dialog x={131} y={528} reversed />
      <Dialog x={249} y={545} reversed />
      <Dialog x={367} y={551} reversed active />
    </>
  );
}

function LowerRight() {
  return (
    <>
      <Leftovers x={970} y={680} />
      <Block $x={966} $y={571} $w={134} $h={69} $c="#fff" />
      <Shard x={966} y={590} w={134} h={50}><Leftovers x={966} y={600} /></Shard>
      <Shard x={966} y={457} w={134} h={114}><Dialog x={927} y={424} /></Shard>
      <Blocks items={[[1104, 640, 82, 40, "#fff"], [970, 640, 216, 11, GREY], [970, 650, 134, 1, LINE]]} />
      <SystemTray x={1100} y={600} />
      <SystemTray x={1104} y={680} />
      <Watermark>
        <span>ANY</span>
        <PlayMark />
        <span>RUN</span>
      </Watermark>
    </>
  );
}

function App() {
  return (
    <>
      <GlobalStyle />
      <Desktop>
        <RegistryEditor />
        <TopDialogs />
        <LeftDebris />
        <RightDebris />
        <MiddleDialogs />
        <LowerRight />
      </Desktop>
    </>
  );
}

export default App;
